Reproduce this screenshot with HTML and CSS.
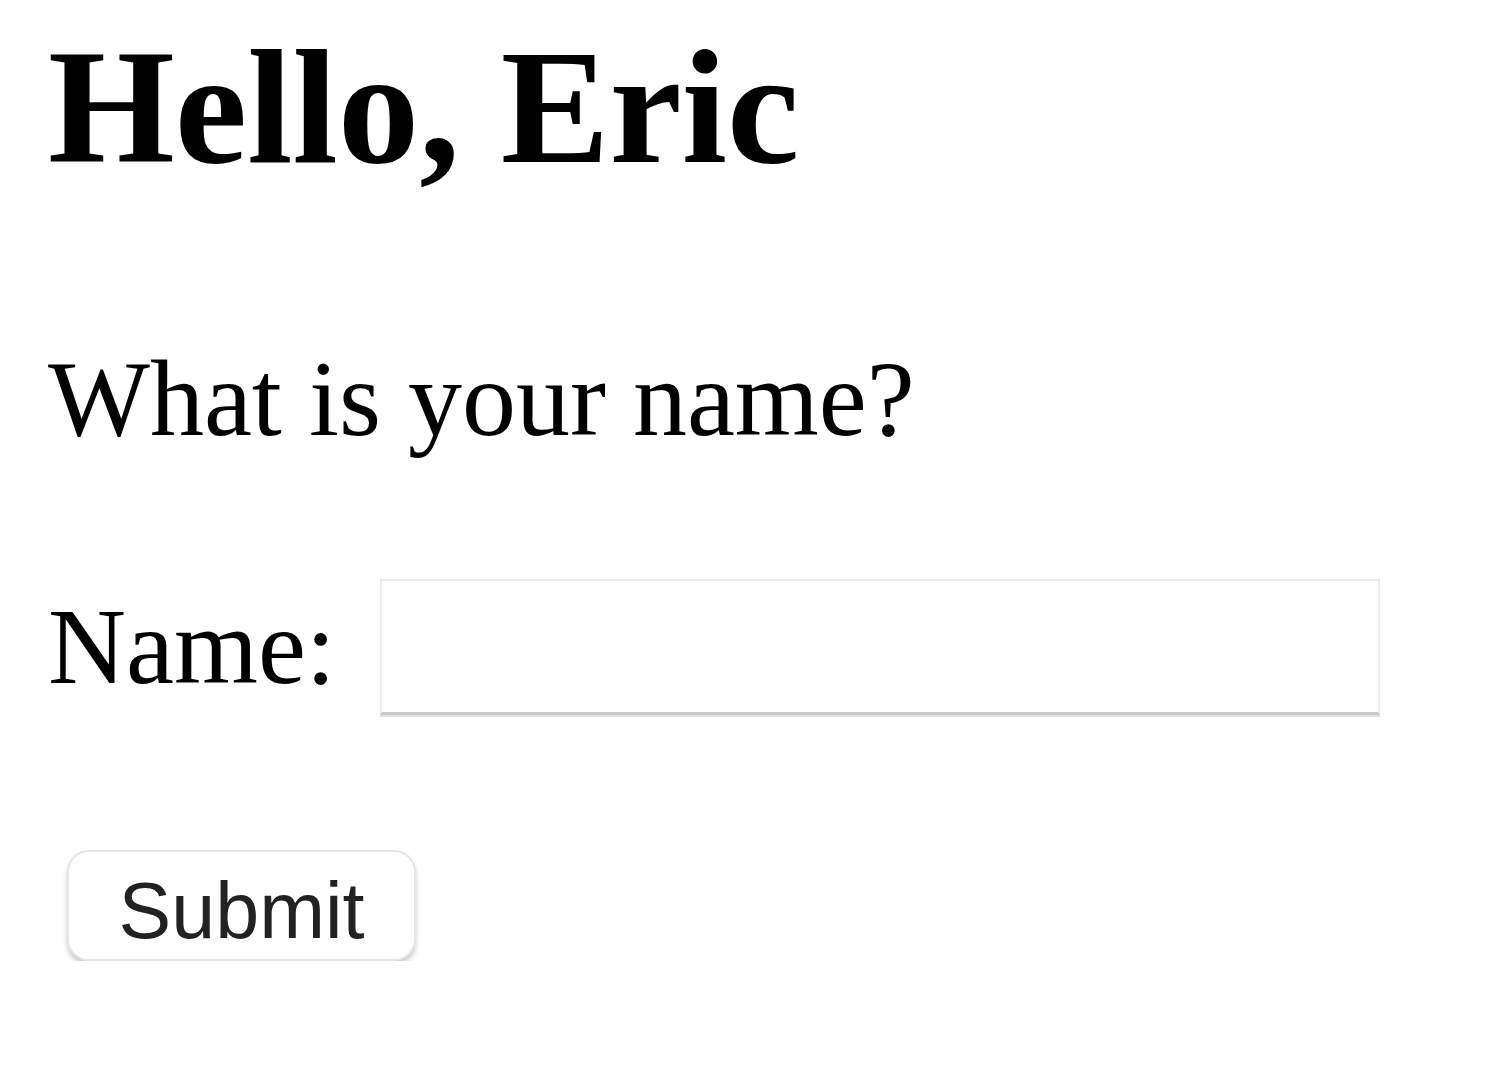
FILE: index.html
```html
<!DOCTYPE html>
<html lang="en">
<head>
    <meta charset="UTF-8">
    <meta name="viewport" content="width=device-width, initial-scale=1.0">
    <title>Hello</title>
    <link rel="stylesheet" href="styles.css">
</head>
<body>
    <div class="page">
        <h1 class="greeting">Hello, Eric</h1>

        <p class="question">What is your name?</p>

        <!-- formulier voor naam -->
        <form class="name-form" onsubmit="return false;">
            <div class="field">
                <label for="name" class="field-label">Name:</label>
                <input type="text" id="name" class="field-input">
            </div>
            <button type="submit" class="submit-btn">Submit</button>
        </form>
    </div>
</body>
</html>
```

FILE: styles.css
```css
body {
    margin: 0;
    background-color: #fff;
    font-family: "Liberation Serif", "Times New Roman", serif;
    color: #000;
}
.page {
    display: flex;
    flex-direction: column;
    align-items: flex-start;
    padding: 26px 0 0 48px;
}
.greeting {
    margin: 0;
    font-size: 163px;
    font-weight: bold;
    line-height: 1;
}
.question {
    margin: 156px 0 0 0;
    font-size: 108px;
    line-height: 1;
}
.name-form {
    display: flex;
    flex-direction: column;
    align-items: flex-start;
    margin-top: 126px;
}
.field {
    display: flex;
    align-items: center;
    gap: 44px;
}
.field-label {
    font-size: 108px;
    line-height: 1;
}
.field-input {
    box-sizing: border-box;
    width: 1000px;
    height: 136px;
    margin: 0;
    border: 2px solid #ebebeb;
    border-bottom: 3px solid #c9c9c9;
    background-color: #fff;
    box-shadow: 0 2px 0 #e2e2e2;
    outline: none;
}
.submit-btn {
    box-sizing: border-box;
    width: 349px;
    height: 111px;
    margin: 135px 0 0 19px;
    padding: 10px 0 0 0;
    border: 2px solid #e6e6e6;
    border-radius: 22px;
    background-color: #fff;
    box-shadow: 0 4px 5px rgba(0, 0, 0, 0.2);
    font-family: "Liberation Sans", Arial, sans-serif;
    font-size: 79px;
    color: #222;
}
```
